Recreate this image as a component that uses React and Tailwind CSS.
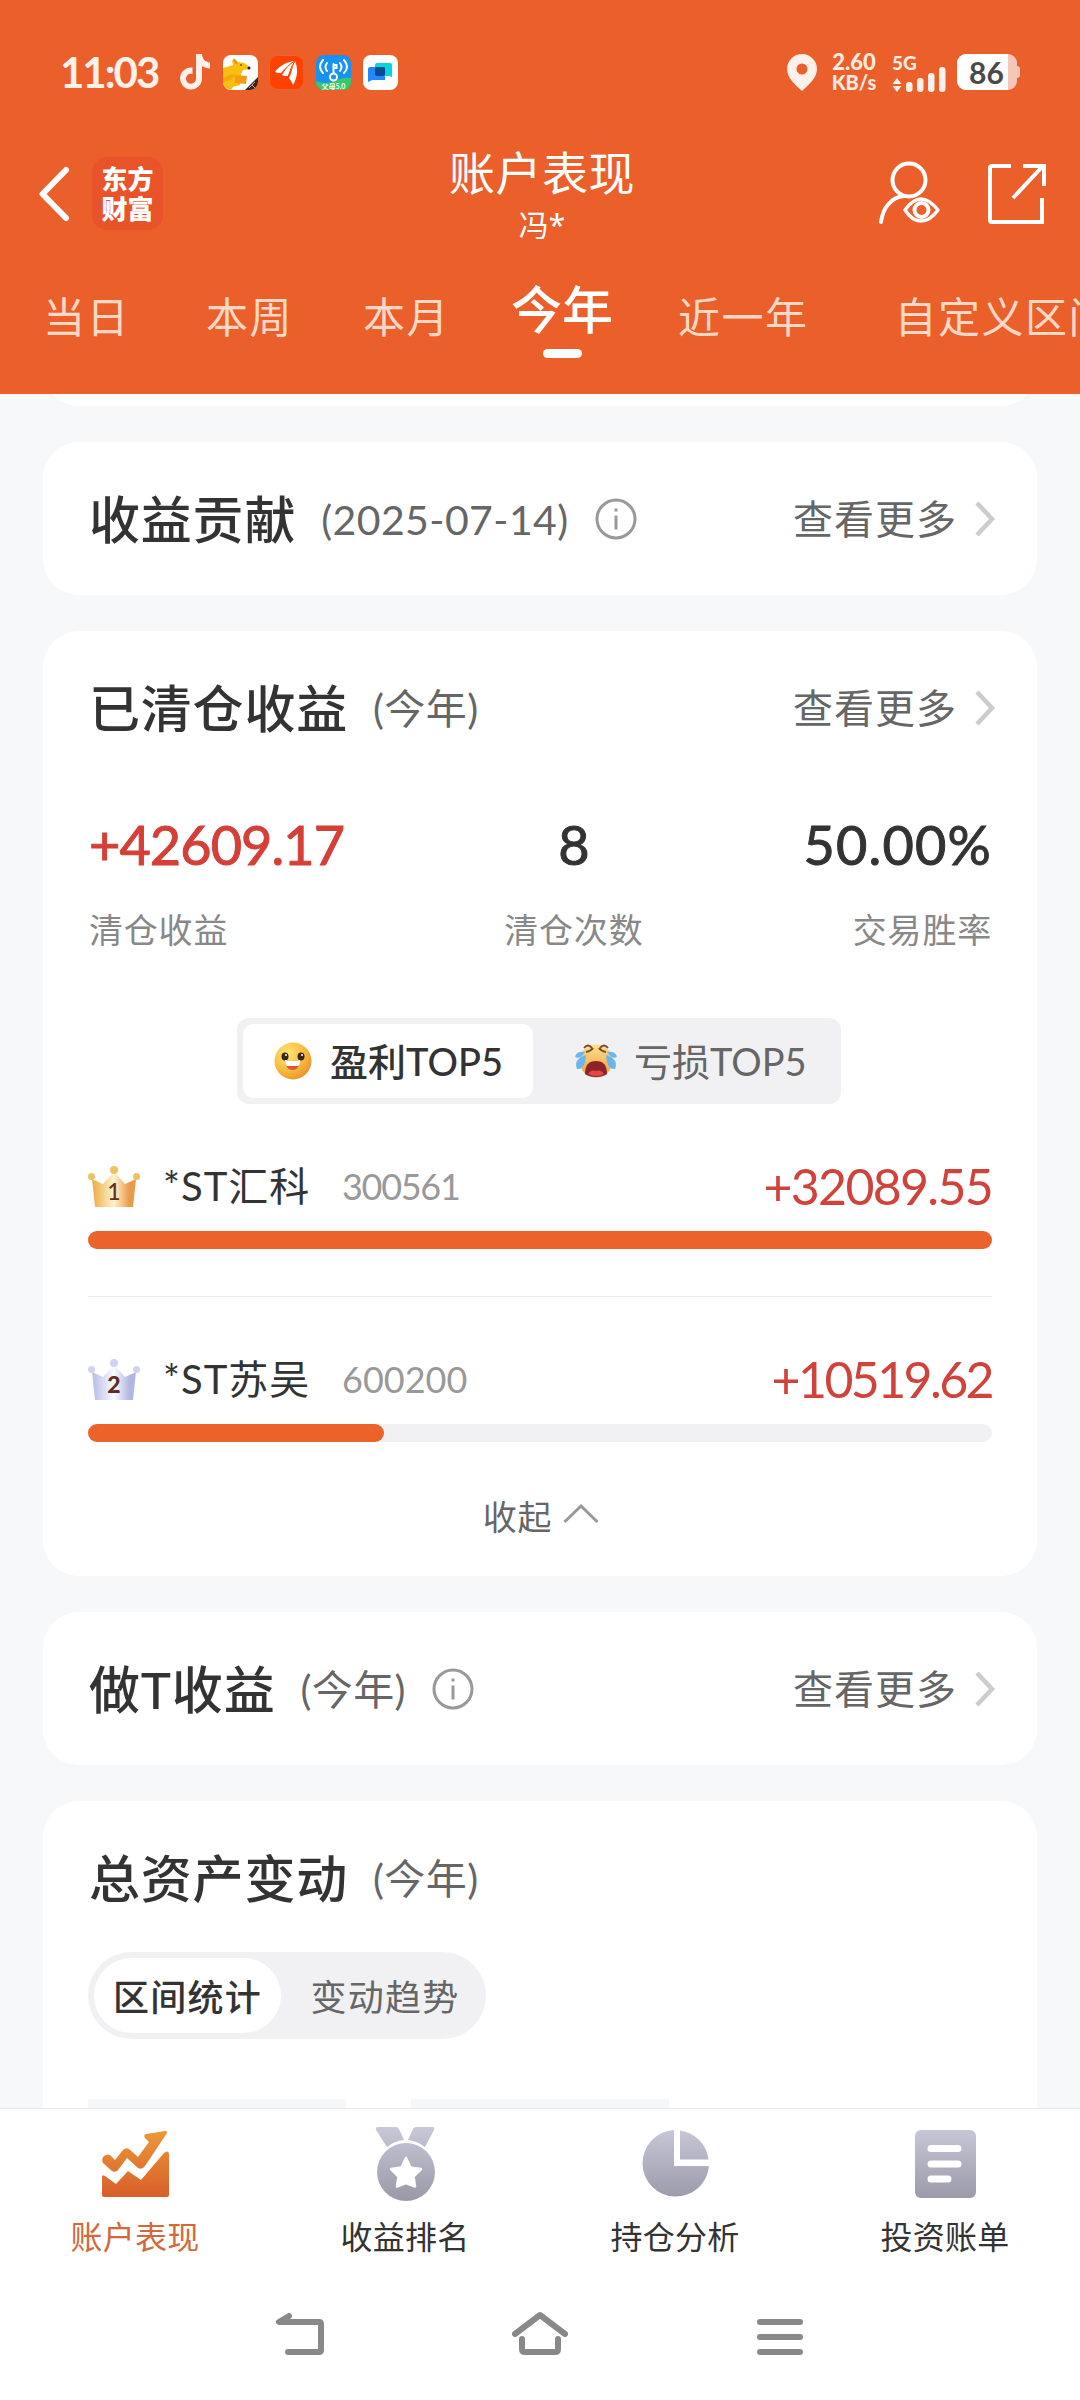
const periods = [
  { name: "当日", className: "ml-[43px]" },
  { name: "本周", className: "ml-[76px]" },
  { name: "本月", className: "ml-[70px]" },
  { name: "今年", active: true, className: "ml-[61px]" },
  { name: "近一年", className: "ml-[65px]" },
  { name: "自定义区间", className: "ml-[86px]" },
];

const stocks = [
  {
    rank: 1,
    name: "*ST汇科",
    code: "300561",
    profit: 32089.55,
    codeClass: "tracking-[-1.300px]",
    profitClass: "tracking-[-1.700px]",
  },
  {
    rank: 2,
    name: "*ST苏吴",
    code: "600200",
    profit: 10519.62,
    codeClass: "tracking-normal",
    profitClass: "tracking-[-2.600px]",
  },
];

function StatusApps() {
  return (
    <div className="flex items-center">
      <svg className="ml-[21px]" width="32" height="36" viewBox="0 0 32 36">
        <path
          d="M17 0h6c.4 5 3.2 8 8 8.400v6c-3 0-5.700-.8-8-2.400v12.500A11 11 0 1 1 13.500 13.600v6.300a5 5 0 1 0 3.500 4.700z"
          fill="#fff0ea"
        />
      </svg>
      <svg className="ml-3" width="35" height="35" viewBox="0 0 35 35">
        <defs>
          <clipPath id="roundApp">
            <rect width="35" height="35" rx="8" />
          </clipPath>
        </defs>
        <g clipPath="url(#roundApp)">
          <rect width="35" height="35" fill="#fff" />
          <path d="M0 13l7-2 3-1-1-4 2-3 4 4 6 1 6 4v2l-7 1-2 4-1 11-7 2-2 3-8-3z" fill="#f8be10" />
          <path d="M12 20l12 1-1 8-11-1z" fill="#f99a14" />
          <path d="M0 23l9-4 4 1-6 5-7 2z" fill="#f2a808" />
          <path d="M11 5l3 4" stroke="#d58f08" strokeWidth="1.500" />
          <circle cx="26" cy="13" r="1.500" fill="#222" />
          <circle cx="18" cy="10" r=".8" fill="#222" />
          <path d="M35 22L22 35h13z" fill="#3c2418" />
          <path d="M26 33l6-6M29 30l3 3" stroke="#b9aaa0" />
        </g>
      </svg>
      <svg className="ml-[11px]" width="35" height="35" viewBox="0 0 35 35">
        <rect x=".5" y=".5" width="34" height="34" rx="8" fill="#ff4200" stroke="#f2622e" />
        <path d="M6 17C10 11 17 7 26 6c-6 3-10 7-14 12-2 0-4 0-6-1z" fill="#fff" />
        <path d="M13 20C16 13 20 8 26 6c-3 4-4 10-7 15-2 0-4 0-6-1z" fill="#fff" />
        <path d="M26 6c3 7 3 16-2 24-1-2-2-5-4-7 3-5 3-11 6-17z" fill="#fff" />
        <path d="M26 6c-6 3-9 7-13 13M26 6c-4 5-5 11-7 16" stroke="#ff4200" fill="none" />
      </svg>
      <svg className="ml-3" width="35" height="35" viewBox="0 0 35 35">
        <g clipPath="url(#roundApp)">
          <rect width="35" height="35" fill="#1791f2" />
          <path d="M0 26q9 4 18 0t17-3v12H0z" fill="#35c86c" />
          <g fill="none" stroke="#fff" strokeWidth="2" strokeLinecap="round">
            <path d="M7 5q-6 7 0 13M11 8q-3 4 0 8M28 5q6 7 0 13M24 8q3 4 0 8" />
            <circle cx="17.500" cy="22" r="3.500" />
            <path d="M17.500 18V9M17.500 10h3v3h-3" />
          </g>
          <text x="17.500" y="34" textAnchor="middle" fontSize="7" fontWeight="700" fill="#fff">
            父母5.0
          </text>
        </g>
      </svg>
      <svg className="ml-3" width="35" height="35" viewBox="0 0 35 35">
        <rect width="35" height="35" rx="8" fill="#fff" />
        <path d="M14 8h13q2 0 2 2v12l-3-1H12V10q0-2 2-2z" fill="#06d5dd" />
        <path d="M7 12h15v13H9l-4 2V14q0-2 2-2z" fill="#2187fb" />
        <rect x="12" y="12" width="10" height="9" rx="2" fill="#074a96" />
      </svg>
    </div>
  );
}

function StatusBar() {
  return (
    <div className="flex h-[145px] items-center px-[60px] pb-px">
      <span className="w-[98px] whitespace-nowrap text-[42px] font-bold leading-none tracking-[-2px] text-[#fff0ea]">
        11:03
      </span>
      <StatusApps />
      <div className="ml-auto flex items-center">
        <svg width="30" height="37" viewBox="0 0 30 37">
          <path
            d="M15 0a15 15 0 0 1 15 15c0 8-7 15-15 22C7 30 0 23 0 15A15 15 0 0 1 15 0zm0 9.500a5.500 5.500 0 1 0 0 11 5.500 5.500 0 0 0 0-11z"
            fill="#fff0ea"
          />
        </svg>
        <div className="ml-[12px] flex w-[50px] flex-col items-center text-[20px] font-black leading-[21px] text-[#ffeae1]">
          <span className="text-[22px]">2.60</span>
          <span>KB/s</span>
        </div>
        <div className="ml-[13px] flex flex-col">
          <span className="text-[19px] font-black leading-[20px] text-[#ffeae1]">5G</span>
          <svg className="-mt-[7px]" width="55" height="26" viewBox="0 0 55 26" fill="#fff0ea">
            <path d="M5 12l4.500 6h-9zM5 26l4.500-6h-9z" />
            <rect x="14" y="16" width="6.500" height="10" rx="3" />
            <rect x="25" y="12" width="6.500" height="14" rx="3" />
            <rect x="36" y="7" width="6.500" height="19" rx="3" />
            <rect x="47" y="1" width="6.500" height="25" rx="3" />
          </svg>
        </div>
        <div className="ml-[10px] flex items-center">
          <div className="flex h-[36px] w-[60px] items-center overflow-hidden rounded-[9px] bg-[#f7c7b6]">
            <span className="flex h-full w-[51px] items-center justify-center bg-white pl-2 text-[30px] font-bold leading-none text-[#4a4a4a]">
              86
            </span>
          </div>
          <div className="h-3 w-[3px] rounded-r-sm bg-[#f7c7b6]" />
        </div>
      </div>
    </div>
  );
}

function TitleBar() {
  return (
    <div className="grid h-[107px] grid-cols-[1fr_auto_1fr] items-center pr-[34px] pl-[36px]">
      <div className="flex items-center pb-3">
        <svg width="36" height="56" viewBox="0 0 36 56">
          <path d="M30 4L6.500 28 30 52" fill="none" stroke="#fff" strokeWidth="6" strokeLinecap="round" strokeLinejoin="round" />
        </svg>
        <div className="ml-[20px] flex h-[73px] w-[71px] flex-col items-center justify-center rounded-[15px] bg-[#e95329] text-[26px] font-black leading-[30px] text-white">
          <span>东方</span>
          <span>财富</span>
        </div>
      </div>
      <div className="flex flex-col items-center pb-1.5 pl-0.5 text-white">
        <h1 className="text-[46px] leading-[56px] tracking-[0.500px]">账户表现</h1>
        <p className="text-[30px] leading-[46px]">
          冯<span className="font-['Noto_Sans']">*</span>
        </p>
      </div>
      <div className="flex items-center justify-end pb-3.5">
        <svg width="64" height="64" viewBox="0 0 64 64" fill="none" stroke="#fff" strokeWidth="4" strokeLinecap="round">
          <circle cx="31" cy="19" r="16.500" />
          <path d="M3 61C5 46 14 36 26 35" />
          <path d="M27 49q8-11 16-11t17 11q-8 11-17 11t-16-11z" strokeLinejoin="round" strokeWidth="3.500" />
          <circle cx="43.500" cy="49" r="7" />
        </svg>
        <svg className="ml-[44px]" width="60" height="62" viewBox="0 0 60 62" fill="none" stroke="#fff" strokeWidth="4">
          <path d="M25 4H6Q4 4 4 6v52q0 2 2 2h50V36" />
          <path d="M37 4h21v20M56 5L27 36" />
        </svg>
      </div>
    </div>
  );
}

function PeriodTabs() {
  return (
    <nav className="flex h-[142px] items-start overflow-hidden whitespace-nowrap">
      {periods.map((p) =>
        p.active ? (
          <div key={p.name} className={`${p.className} flex shrink-0 flex-col items-center pt-[23px] text-white`}>
            <span className="text-[51px] font-medium leading-[70px]">{p.name}</span>
            <span className="mt-[4px] h-[9px] w-[39px] rounded-full bg-white" />
          </div>
        ) : (
          <span
            key={p.name}
            className={`${p.className} shrink-0 pt-[35px] text-[42px] leading-[60px] tracking-[1.500px] text-[#ffd9c6]`}
          >
            {p.name}
          </span>
        )
      )}
    </nav>
  );
}

function InfoIcon() {
  return (
    <svg className="ml-[26px]" width="42" height="42" viewBox="0 0 42 42" fill="none" stroke="#999" strokeWidth="3">
      <circle cx="21" cy="21" r="19" />
      <path d="M21 17.500v14M21 10.500v3" />
    </svg>
  );
}

function CardHeader({ title, note, info, more }) {
  return (
    <div className="flex h-[153px] items-center">
      <h2 className="ml-px pt-[3px] text-[51px] font-medium tracking-[0.800px] text-[#333]">{title}</h2>
      <span className="ml-[25px] pt-0.5 text-[41px] tracking-[0.400px] text-[#666]">{note}</span>
      {info && <InfoIcon />}
      {more && (
        <div className="-mr-[4px] ml-auto flex items-center">
          <span className="pt-px text-[40px] tracking-[1px] text-[#666]">查看更多</span>
          <svg className="ml-[17px]" width="22" height="36" viewBox="0 0 22 36">
            <path d="M3 2l15 16L3 34" fill="none" stroke="#ccc" strokeWidth="4.500" />
          </svg>
        </div>
      )}
    </div>
  );
}

function Card({ children, className = "" }) {
  return <section className={`mx-[43px] rounded-[36px] bg-white px-[45px] ${className}`}>{children}</section>;
}

function Stat({ value, label, className, valueClass = "" }) {
  return (
    <div className={`flex flex-col ${className}`}>
      <span className={`text-[54px] leading-[70px] [-webkit-text-stroke:1px_currentColor] ${valueClass}`}>{value}</span>
      <span className="mt-[15px] text-[34px] leading-[70px] tracking-[0.800px] text-[#888]">{label}</span>
    </div>
  );
}

function HappyFace() {
  return (
    <svg width="38" height="38" viewBox="0 0 38 38">
      <defs>
        <radialGradient id="happy" cx=".35" cy=".3" r=".8">
          <stop offset="0" stopColor="#ffe873" />
          <stop offset=".6" stopColor="#f8b73c" />
          <stop offset="1" stopColor="#e98b2c" />
        </radialGradient>
      </defs>
      <circle cx="19" cy="19" r="18.500" fill="url(#happy)" />
      <ellipse cx="11" cy="14.500" rx="3.500" ry="4" fill="#3a2518" />
      <ellipse cx="27" cy="14.500" rx="3.500" ry="4" fill="#3a2518" />
      <circle cx="12" cy="13" r="1" fill="#fff" />
      <circle cx="28" cy="13" r="1" fill="#fff" />
      <path d="M11 18q8 2 15 0-1 10-7.500 10T11 18z" fill="#e0562f" />
      <path d="M11 18q8 2 15 0 0 5-2 6H13q-2-2-2-6z" fill="#fff" />
    </svg>
  );
}

function CryFace() {
  return (
    <svg width="46" height="36" viewBox="0 0 46 36">
      <defs>
        <linearGradient id="cry" x1="0" y1="0" x2="0" y2="1">
          <stop offset="0" stopColor="#fde08a" />
          <stop offset="1" stopColor="#eb9c3e" />
        </linearGradient>
      </defs>
      <circle cx="23" cy="18" r="16.500" fill="url(#cry)" />
      <path d="M11 5q4-5 8 0M27 5q4-5 8 0M13 9q5-1 7-4M33 9q-5-1-7-4" fill="none" stroke="#7a4a31" strokeWidth="2" />
      <path d="M12 31q0-13 11-13t11 13q-4 3-11 3t-11-3z" fill="#8d2326" />
      <path d="M15 31q3-5 8-3 5-2 8 3-3 2-8 2t-8-2z" fill="#e2474a" />
      <path d="M12 9Q3 8 2 14q5 3 10-5zM13 12Q0 16 4 26q8 1 9-14zM34 9q9-1 10 5-5 3-10-5zM33 12q13 4 9 14-8 1-9-14z" fill="#6bb6f0" />
    </svg>
  );
}

function Crown({ rank }) {
  const gold = rank === 1;
  return (
    <svg width="52" height="42" viewBox="0 0 52 42">
      <defs>
        <linearGradient id={`crown${rank}`}>
          <stop offset="0.050" stopColor={gold ? "#efb24e" : "#bcc2e8"} />
          <stop offset=".5" stopColor={gold ? "#fff3cd" : "#fafaff"} />
          <stop offset=".85" stopColor={gold ? "#e99a4a" : "#b3b6e2"} />
        </linearGradient>
      </defs>
      <path d="M4 13l11 5L26 6l11 12 11-5-3 28H7z" fill={`url(#crown${rank})`} />
      <g fill={gold ? "#f0c163" : "#ced3f3"}>
        <circle cx="3.500" cy="10.500" r="3.500" />
        <circle cx="26" cy="4" r="4" />
        <circle cx="48.500" cy="10.500" r="3.500" />
      </g>
      <text x="26" y="34" textAnchor="middle" fontSize="23" fontWeight={gold ? 500 : 900} fill="#5d2e20">
        {rank}
      </text>
    </svg>
  );
}

function StockRow({ stock, max }) {
  return (
    <div>
      <div className="flex h-[64px] items-center">
        <Crown rank={stock.rank} />
        <span className="ml-[23px] w-[158px] whitespace-nowrap pb-0.5 text-[40px] tracking-[1px] text-[#333]">
          {stock.name}
        </span>
        <span className={`ml-[21px] pb-0.5 text-[36px] text-[#999] ${stock.codeClass}`}>{stock.code}</span>
        <span className={`ml-auto pb-0.5 text-[50px] text-[#cf433b] ${stock.profitClass}`}>
          +{stock.profit.toFixed(2)}
        </span>
      </div>
      <div className="mt-[12px] h-[18px] rounded-[9px] bg-[#f1f1f4]">
        <div className="h-full rounded-[9px] bg-[#ec622b]" style={{ width: `${(stock.profit / max) * 100}%` }} />
      </div>
    </div>
  );
}

function ClearedProfit() {
  return (
    <Card className="mt-9 h-[945px] shrink-0">
      <CardHeader title="已清仓收益" note="(今年)" more />
      <div className="mt-[26px] flex justify-between text-[#333]">
        <Stat
          value="+42609.17"
          label="清仓收益"
          className="items-start pl-px"
          valueClass="text-[#d43f37] tracking-[-0.900px]"
        />
        <Stat value="8" label="清仓次数" className="items-center" />
        <Stat value="50.00%" label="交易胜率" className="items-end" valueClass="tracking-[1.200px]" />
      </div>
      <div className="mx-auto mt-[53px] flex h-[86px] w-[604px] -translate-x-px rounded-[12px] bg-[#f1f1f4] p-1.5 text-[38px]">
        <div className="flex w-[290px] items-center rounded-[11px] bg-white pl-[31px] font-medium text-[#333]">
          <HappyFace />
          <span className="ml-[18px]">盈利TOP5</span>
        </div>
        <div className="flex items-center pl-[40px] text-[#666]">
          <CryFace />
          <span className="ml-[15px]">亏损TOP5</span>
        </div>
      </div>
      <div className="mt-[51px]">
        <StockRow stock={stocks[0]} max={stocks[0].profit} />
      </div>
      <div className="mt-[47px] border-t border-[#ececee] pt-[51px]">
        <StockRow stock={stocks[1]} max={stocks[0].profit} />
      </div>
      <div className="mt-[50px] flex items-center justify-center pl-0.5 text-[34px] leading-[50px] tracking-[0.800px] text-[#666]">
        收起
        <svg className="ml-[11px] -mt-1.5" width="36" height="20" viewBox="0 0 36 20">
          <path d="M1.500 18L18 2l16.500 16" fill="none" stroke="#999" strokeWidth="3" />
        </svg>
      </div>
    </Card>
  );
}

function AssetChange() {
  return (
    <Card className="mt-9 h-[500px] shrink-0">
      <CardHeader title="总资产变动" note="(今年)" />
      <div className="mt-[-2px] flex h-[87px] w-[398px] rounded-full bg-[#f1f1f4] p-1.5 text-[36px] tracking-[1.200px]">
        <div className="flex w-[187px] items-center justify-center rounded-full bg-white pt-0.5 font-medium text-[#333]">
          区间统计
        </div>
        <div className="flex flex-1 items-center justify-center pt-0.5 pl-[9px] text-[#666]">变动趋势</div>
      </div>
      <div className="mt-[60px] flex gap-[65px]">
        <div className="h-[90px] w-[258px] bg-[#f6f7f9]" />
        <div className="h-[90px] w-[258px] bg-[#f6f7f9]" />
      </div>
    </Card>
  );
}

function NavItem({ label, active, children }) {
  return (
    <div className="flex flex-1 flex-col items-center">
      <svg width="74" height="78" viewBox="0 0 74 78">
        {children}
      </svg>
      <span
        className={`mt-[11px] text-[32px] leading-[48px] tracking-[0.300px] ${active ? "text-[#d2693a]" : "text-[#333]"}`}
      >
        {label}
      </span>
    </div>
  );
}

function BottomNav() {
  return (
    <div className="h-[292px] shrink-0 border-t border-[#e9e9eb] bg-white pt-[15px]">
      <svg className="absolute" width="0" height="0">
        <defs>
          <linearGradient id="navOrange" x1="0" y1="5" x2="0" y2="72" gradientUnits="userSpaceOnUse">
            <stop offset="0" stopColor="#eb9a38" />
            <stop offset="1" stopColor="#d95f2b" />
          </linearGradient>
          <linearGradient id="navGray" x1="0" y1="3" x2="0" y2="76" gradientUnits="userSpaceOnUse">
            <stop offset="0" stopColor="#c9c8d8" />
            <stop offset="1" stopColor="#9a99a8" />
          </linearGradient>
        </defs>
      </svg>
      <div className="flex">
        <NavItem label="账户表现" active>
          <path
            d="M5 39q-2-4 1-7 4-3 7 0l4 4L25 26q3-3 6-1l9 8 11-15-4-4q-2-3 1-4l19-3q3 0 2 2L47 42q-3 4-7 2L29 34 20 46q-3 3-6 1z"
            fill="url(#navOrange)"
          />
          <path d="M4 53q0-3 3-1l11 8 12-13 13 9 23-27q5-4 5 2v40q0 2-2 2H6q-2 0-2-2z" fill="url(#navOrange)" />
        </NavItem>
        <NavItem label="收益排名">
          <path d="M10 3h18q2 0 3 2l5 11q-10 1-17 7L8 6q-1-3 2-3zM65 3H48q-2 0-3 2l-5 11q9 1 17 7l9-17q1-3-1-3z" fill="url(#navGray)" />
          <circle cx="38" cy="48" r="29" fill="url(#navGray)" />
          <path
            d="M38 34l4.500 9.500 10.500 1.500-7.500 7.500 1.500 10-9-3.500-9 3.500 1.500-10-7.500-7.500L33.500 43.500z"
            fill="#fff"
            stroke="#fff"
            strokeWidth="2.500"
            strokeLinejoin="round"
          />
        </NavItem>
        <NavItem label="持仓分析">
          <path d="M36 6v36h35A33.300 33.300 0 1 1 36 6z" fill="url(#navGray)" />
          <path d="M42 6.500A33 33 0 0 1 70.500 35.500H42z" fill="url(#navGray)" />
        </NavItem>
        <NavItem label="投资账单">
          <rect x="7" y="6" width="61" height="68" rx="6" fill="url(#navGray)" />
          <path d="M23 24.500h27M23 40h27M23 55h17" stroke="#fff" strokeWidth="7" strokeLinecap="round" />
        </NavItem>
      </div>
      <div className="mt-[49px] flex justify-center gap-[184px]">
        {/* system keys */}
        <svg width="56" height="50" viewBox="0 0 56 50" fill="none" stroke="#898989" strokeWidth="6" strokeLinecap="round" strokeLinejoin="round">
          <path d="M17 6L7 12h40q2 0 2 2v26q0 2-2 2H16" />
        </svg>
        <svg width="56" height="50" viewBox="0 0 56 50" fill="none" stroke="#898989" strokeWidth="6" strokeLinecap="round" strokeLinejoin="round">
          <path d="M3 24L28 5l25 19M10 29v10q0 3 3 3h30q3 0 3-3V29" />
        </svg>
        <svg width="56" height="50" viewBox="0 0 56 50" fill="none" stroke="#898989" strokeWidth="6" strokeLinecap="round">
          <path d="M8 12h40M8 27h40M8 42h40" />
        </svg>
      </div>
    </div>
  );
}

export default function App() {
  return (
    <div className="flex h-[2400px] w-[1080px] flex-col overflow-hidden bg-[#f6f8fa] font-[Lato,'Noto_Sans_CJK_SC',sans-serif]">
      <header className="h-[394px] shrink-0 bg-[#eb5f2b]">
        <StatusBar />
        <TitleBar />
        <PeriodTabs />
      </header>
      <main className="flex min-h-0 flex-1 flex-col overflow-hidden">
        {/* tail of the card scrolled under the header */}
        <div className="mx-[43px] flex h-3 shrink-0 flex-col justify-end overflow-hidden">
          <div className="h-20 shrink-0 rounded-[36px] bg-white" />
        </div>
        <Card className="mt-9 shrink-0">
          <CardHeader title="收益贡献" note="(2025-07-14)" info more />
        </Card>
        <ClearedProfit />
        <Card className="mt-9 shrink-0">
          <CardHeader title="做T收益" note="(今年)" info more />
        </Card>
        <AssetChange />
      </main>
      <BottomNav />
    </div>
  );
}
